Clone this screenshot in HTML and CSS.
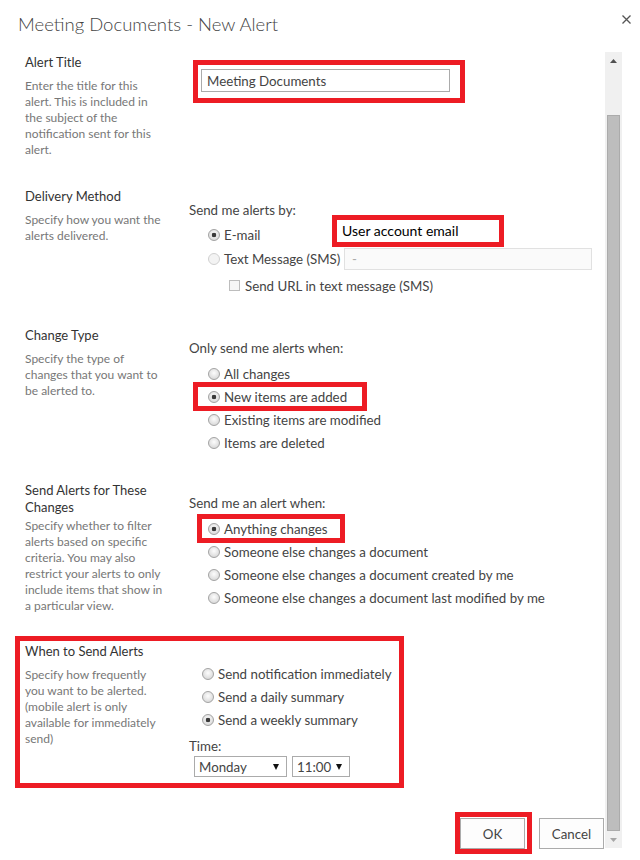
FILE: index.html
```html
<!DOCTYPE html>
<html lang="en">
<head>
<meta charset="UTF-8">
<title>Meeting Documents - New Alert</title>
<link rel="stylesheet" href="styles.css">
</head>
<body>
<div class="dialog">
  <div class="dlg-head">
    <h1>Meeting Documents - New Alert</h1>
    <svg class="close" width="9" height="9" viewBox="0 0 9 9"><path d="M0.5 0.5L8.5 8.5M8.5 0.5L0.5 8.5" stroke="#555" stroke-width="1.3"/></svg>
  </div>

  <div class="dlg-body">
    <div class="dlg-content">

      <div class="section s-title">
        <div>
          <h3 class="sec-title">Alert Title</h3>
          <p class="sec-desc">Enter the title for this<br>alert. This is included in<br>the subject of the<br>notification sent for this<br>alert.</p>
        </div>
        <div class="field">
          <div class="mark mark-input">
            <input type="text" class="text-input" value="Meeting Documents">
          </div>
        </div>
      </div>

      <div class="section s-delivery">
        <div>
          <h3 class="sec-title">Delivery Method</h3>
          <p class="sec-desc">Specify how you want the<br>alerts delivered.</p>
        </div>
        <div class="field">
          <p class="lead">Send me alerts by:</p>
          <div class="options">
            <label class="opt email-row"><input type="radio" class="radio" name="dm" checked>E-mail
              <span class="mark callout">User account email</span>
            </label>
            <label class="opt sms-row"><input type="radio" class="radio" name="dm" disabled><span class="sms-label">Text Message (SMS)</span><input type="text" class="sms-input" value="-" disabled></label>
            <label class="opt url-row"><input type="checkbox" class="check" disabled>Send URL in text message (SMS)</label>
          </div>
        </div>
      </div>

      <div class="section s-type">
        <div>
          <h3 class="sec-title">Change Type</h3>
          <p class="sec-desc">Specify the type of<br>changes that you want to<br>be alerted to.</p>
        </div>
        <div class="field">
          <p class="lead">Only send me alerts when:</p>
          <div class="options">
            <label class="opt"><input type="radio" class="radio" name="ct">All changes</label>
            <label class="opt mark mark-new"><input type="radio" class="radio" name="ct" checked>New items are added</label>
            <label class="opt"><input type="radio" class="radio" name="ct">Existing items are modified</label>
            <label class="opt"><input type="radio" class="radio" name="ct">Items are deleted</label>
          </div>
        </div>
      </div>

      <div class="section s-filter">
        <div>
          <h3 class="sec-title">Send Alerts for These<br>Changes</h3>
          <p class="sec-desc tight">Specify whether to filter<br>alerts based on specific<br>criteria. You may also<br>restrict your alerts to only<br>include items that show in<br>a particular view.</p>
        </div>
        <div class="field">
          <p class="lead">Send me an alert when:</p>
          <div class="options">
            <label class="opt mark mark-any"><input type="radio" class="radio" name="sa" checked>Anything changes</label>
            <label class="opt"><input type="radio" class="radio" name="sa">Someone else changes a document</label>
            <label class="opt"><input type="radio" class="radio" name="sa">Someone else changes a document created by me</label>
            <label class="opt"><input type="radio" class="radio" name="sa">Someone else changes a document last modified by me</label>
          </div>
        </div>
      </div>

      <div class="mark mark-when">
        <div class="section s-when">
          <div>
            <h3 class="sec-title">When to Send Alerts</h3>
            <p class="sec-desc">Specify how frequently<br>you want to be alerted.<br>(mobile alert is only<br>available for immediately<br>send)</p>
          </div>
          <div class="field">
            <div class="options when-options">
              <label class="opt"><input type="radio" class="radio" name="ws">Send notification immediately</label>
              <label class="opt"><input type="radio" class="radio" name="ws">Send a daily summary</label>
              <label class="opt"><input type="radio" class="radio" name="ws" checked>Send a weekly summary</label>
            </div>
            <p class="lead time-lead">Time:</p>
            <div class="time-row">
              <div class="select day"><span>Monday</span><svg width="6" height="6" viewBox="0 0 6 6"><path d="M0 0H6L3 6Z" fill="#111"/></svg></div>
              <div class="select hour"><span>11:00</span><svg width="6" height="6" viewBox="0 0 6 6"><path d="M0 0H6L3 6Z" fill="#111"/></svg></div>
            </div>
          </div>
        </div>
      </div>

      <div class="buttons">
        <div class="mark mark-ok"><button class="btn">OK</button></div>
        <button class="btn cancel">Cancel</button>
      </div>

    </div>

    <div class="scrollbar">
      <div class="arrow"><svg width="7" height="4" viewBox="0 0 7 4"><path d="M0 4L3.5 0L7 4Z" fill="#505050"/></svg></div>
      <div class="thumb"></div>
      <div class="arrow"><svg width="7" height="4" viewBox="0 0 7 4"><path d="M0 0L3.5 4L7 0Z" fill="#a6a6a6"/></svg></div>
    </div>
  </div>
</div>
</body>
</html>
```

FILE: styles.css
```css
* {
  margin: 0;
  padding: 0;
  box-sizing: border-box;
}
body {
  background: #fff;
  font-family: Lato, "Liberation Sans", sans-serif;
  font-size: 13.3px;
  color: #444;
}
.dialog {
  width: 640px;
}

/* header */
.dlg-head {
  height: 52px;
  display: flex;
  justify-content: space-between;
  align-items: flex-start;
  padding: 12px 9px 0 18px;
}
.dlg-head h1 {
  font-size: 18.5px;
  font-weight: 300;
  line-height: 24px;
  color: #444;
}
.close {
  margin-top: 3px;
}

/* body + scroll */
.dlg-body {
  display: flex;
  align-items: flex-start;
}
.dlg-content {
  width: 605px;
  padding: 2px 0 0 25px;
}
.scrollbar {
  width: 17px;
  height: 796px;
  background: #f0f0f0;
  display: flex;
  flex-direction: column;
  align-items: center;
}
.arrow {
  height: 17px;
  width: 17px;
  display: flex;
  align-items: center;
  justify-content: center;
}
.thumb {
  flex: 1;
  width: 13px;
  margin-top: 46px;
  background: #bdbdbd;
  border: 1px solid #ababab;
}

/* sections */
.section {
  display: grid;
  grid-template-columns: 164px 1fr;
  margin-bottom: 30px;
}
.s-type {
  margin-bottom: 28px;
}
.s-filter {
  margin-bottom: 22px;
}
.s-when {
  margin-bottom: 0;
}
.sec-title {
  font-size: 13px;
  font-weight: normal;
  line-height: 17px;
  color: #333;
}
.sec-desc {
  margin-top: 7px;
  font-size: 12px;
  line-height: 16px;
  color: #777;
}
.sec-desc.tight {
  margin-top: 2px;
}
.field {
  padding-top: 12px;
}
.s-title .field {
  padding-top: 6px;
}
.s-delivery .field {
  padding-top: 13px;
}
.lead {
  line-height: 18px;
  color: #444;
}

/* radio lists */
.options {
  margin: 5px 0 0 19px;
}
.s-delivery .options {
  margin-top: 4px;
}
.opt {
  display: flex;
  align-items: center;
  height: 23px;
  white-space: nowrap;
}
.radio {
  appearance: none;
  width: 12px;
  height: 12px;
  flex: none;
  margin-right: 4px;
  border: 1px solid #a3a3a3;
  border-radius: 50%;
  background: radial-gradient(circle at 50% 40%, #fdfdfd, #d6d6d6 85%);
}
.radio:checked {
  background: radial-gradient(circle, #3a3a3a 0 2px, transparent 2.6px),
    radial-gradient(circle at 50% 40%, #fdfdfd, #d6d6d6 85%);
}
.radio:disabled {
  border-color: #d0d0d0;
  background: #f3f3f3;
}
.check {
  appearance: none;
  width: 11px;
  height: 11px;
  margin: 0 5px 0 21px;
  border: 1px solid #bdbdbd;
  background: #f6f6f6;
}

/* delivery rows */
.email-row {
  position: relative;
}
.sms-row {
  height: 25px;
}
.url-row {
  margin-top: 3px;
}
.sms-label {
  width: 120px;
}
.sms-input {
  width: 248px;
  height: 22px;
  border: 1px solid #e1e1e1;
  background: #fafafa;
  padding-left: 7px;
  font: inherit;
  color: #aaa;
}
.text-input {
  width: 249px;
  height: 23px;
  border: 1px solid #ababab;
  padding-left: 5px;
  font: inherit;
  color: #444;
  background: #fff;
}

/* red annotation boxes */
.mark {
  border: 5px solid #ed1c24;
  background: #fff;
}
.mark-input {
  width: fit-content;
  margin-left: 4px;
  padding: 4px 10px 6px 3px;
}
.callout {
  position: absolute;
  left: 124px;
  top: -8px;
  width: 172px;
  height: 32px;
  padding-left: 5px;
  font-size: 14px;
  line-height: 22px;
  color: #000;
}
.opt.mark {
  width: fit-content;
  height: 29px;
  margin-top: -3px;
  margin-bottom: -3px;
}
.mark-new {
  margin-left: -15px;
  padding: 0 15px 0 10px;
}
.mark-any {
  margin-left: -11px;
  padding: 0 12px 0 6px;
}
.mark-when {
  width: 389px;
  margin-left: -10px;
  padding: 2px 0 6px 5px;
}
.mark-ok {
  padding: 1px 2px 0 0;
}

/* when to send */
.s-when .field {
  padding-top: 19px;
}
.when-options {
  margin: 0 0 0 13px;
}
.time-lead {
  margin-top: 6px;
}
.time-row {
  display: flex;
  gap: 5px;
  margin: 1px 0 0 5px;
}
.select {
  height: 21px;
  display: flex;
  align-items: center;
  justify-content: space-between;
  border: 1px solid #ababab;
  padding: 0 7px 0 4px;
  color: #444;
}
.select.day {
  width: 93px;
}
.select.hour {
  width: 58px;
}

/* buttons */
.buttons {
  display: flex;
  justify-content: flex-end;
  align-items: flex-start;
  margin-top: 24px;
  padding-right: 1px;
}
.btn {
  width: 65px;
  height: 31px;
  border: 1px solid #ababab;
  background: #fdfdfd;
  font: inherit;
  color: #444;
}
.cancel {
  margin: 6px 0 0 7px;
}
```
